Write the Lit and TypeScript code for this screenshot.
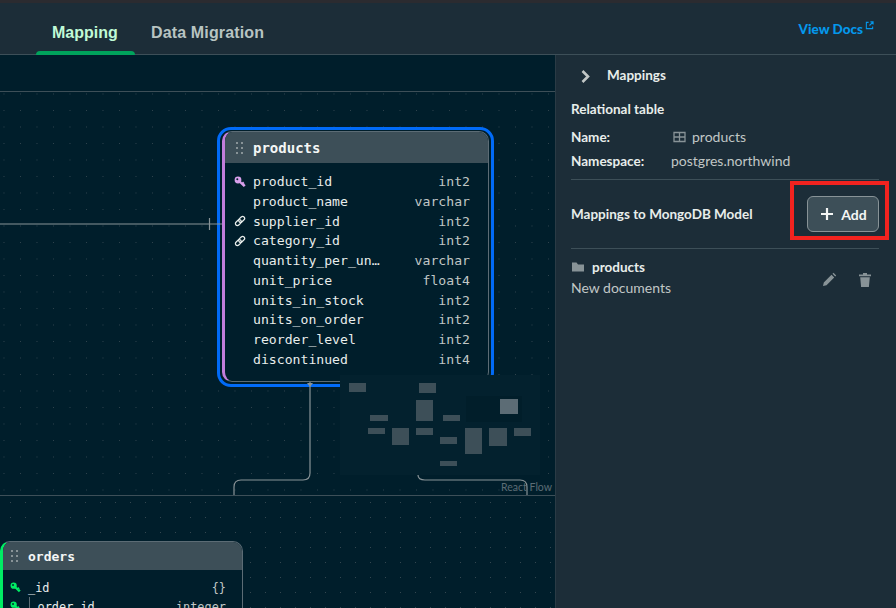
import { LitElement, html, css, svg } from "lit";
import { customElement } from "lit/decorators.js";

const rows: [string, string, string][] = [
  ["key", "product_id", "int2"],
  ["", "product_name", "varchar"],
  ["link", "supplier_id", "int2"],
  ["link", "category_id", "int2"],
  ["", "quantity_per_un…", "varchar"],
  ["", "unit_price", "float4"],
  ["", "units_in_stock", "int2"],
  ["", "units_on_order", "int2"],
  ["", "reorder_level", "int2"],
  ["", "discontinued", "int4"],
];

// minimap nodes: x, y, w, h in minimap coordinates
const mini: [number, number, number, number][] = [
  [9, 8, 17, 9], [79, 8, 17, 10], [76, 25, 17, 21], [30, 40, 18, 6], [103, 40, 17, 6],
  [28, 53, 17, 6], [52, 53, 17, 17], [76, 53, 17, 7], [100, 62, 17, 7], [125, 53, 17, 26],
  [149, 53, 18, 18], [174, 53, 17, 8], [100, 86, 17, 5],
];

const keyIcon = (c: string) => svg`<svg class="ico" viewBox="0 0 12 12" style="color:${c}"><circle cx="4" cy="4" r="3.4" fill="currentColor"/><path d="M5.500 5.500l5 4.800M8 8l1.800-1.600M9.700 9.600l1.200-1.100" stroke="currentColor" stroke-width="2.200" fill="none"/><circle cx="3.300" cy="3.300" r="1" fill="#001e2b"/></svg>`;
const linkIcon = svg`<svg class="ico" viewBox="0 0 12 12"><g transform="rotate(-45 6 6)" stroke="#e8edeb" stroke-width="1.200" fill="none"><rect x="0.300" y="4" width="6.800" height="4" rx="2"/><rect x="4.900" y="4" width="6.800" height="4" rx="2"/></g></svg>`;
const grip = svg`<svg class="grip" viewBox="0 0 8 12"><g fill="#889397"><rect x="0" y="0" width="2" height="2"/><rect x="5" y="0" width="2" height="2"/><rect x="0" y="5" width="2" height="2"/><rect x="5" y="5" width="2" height="2"/><rect x="0" y="10" width="2" height="2"/><rect x="5" y="10" width="2" height="2"/></g></svg>`;

@customElement("app-root")
export class AppRoot extends LitElement {
  static styles = css`
    :host { display: block; width: 896px; height: 608px; overflow: hidden; background: #001e2b; font-family: "Lato", sans-serif; color: #e8edeb; }
    * { box-sizing: border-box; }
    .app { display: flex; flex-direction: column; height: 608px; }
    .chrome { height: 3px; background: #2b2b30; flex: none; }
    .header { height: 52px; flex: none; background: #1c2d38; border-bottom: 1px solid #3d4f58; display: flex; align-items: flex-end; padding-left: 36px; position: relative; }
    .tab { font: 700 16px "Liberation Sans", sans-serif; color: #b8c4c2; height: 51px; padding: 21px 16px 0; }
    .tab.on { color: #c0fad6; width: 99px; position: relative; }
    .tab.on::after { content: ""; position: absolute; left: 0; right: 0; bottom: -1px; height: 4px; background: #00a35c; border-radius: 4px 4px 0 0; }
    .tab.next { letter-spacing: 0.15px; }
    .docs { margin-left: auto; margin-right: 22px; align-self: center; display: flex; color: #0498ec; font: 900 13.500px "Lato", sans-serif; }
    .docs svg { width: 9px; height: 9px; margin: 0 0 0 2px; }
    .body { flex: 1; display: flex; min-height: 0; }
    .canvas { width: 555px; flex: none; display: flex; flex-direction: column; }
    .gap { height: 36px; flex: none; }
    .pane { position: relative; overflow: hidden; }
    .upper { height: 405px; border-top: 1px solid #3d4f58; border-bottom: 1px solid #3d4f58;
      background-image: radial-gradient(circle at 0.5px 0.5px, #2f434d 0.7px, transparent 0.8px); background-size: 16.5px 16.5px; background-position: 3.5px 1.5px; }
    .lower { flex: 1; background-image: radial-gradient(circle at 0.5px 0.5px, #344750 0.7px, transparent 0.8px); background-size: 15px 15px; background-position: 10px 6px; }
    .edges { position: absolute; left: 0; top: 0; width: 555px; height: 404px; }
    .ring { position: absolute; left: 217px; top: 35px; width: 277px; height: 260px; border: 3px solid #016bf8; border-radius: 14px; }
    .node { position: absolute; background: #001e2b; border: 1px solid #5c6c75; border-left: 3px solid #c27ddb; border-radius: 10px; overflow: hidden; }
    .products { left: 222px; top: 39px; width: 267px; height: 251px; }
    .orders { position: absolute; left: 0; top: 45px; width: 243px; height: 100px; border-left-color: #00ed64; }
    .nhead { height: 31px; background: #3d4f58; display: flex; align-items: center; padding-left: 11px; gap: 9px; font: 700 14px "DejaVu Sans Mono", monospace; color: #f4f6f5; }
    .grip { width: 8px; height: 12px; flex: none; }
    .orders .nhead { height: 28px; padding-left: 8px; gap: 9px; font-size: 13px; }
    .list { padding-top: 8.800px; }
    .row { height: 19.750px; display: flex; align-items: center; font: 13.150px "DejaVu Sans Mono", monospace; color: #e8edeb; padding-right: 18px; }
    .cell { width: 28px; flex: none; padding-left: 9px; display: flex; }
    .ico { width: 12px; height: 12px; display: block; }
    .type { margin-left: auto; color: #c1c7c6; }
    .orders .list { padding-top: 8px; }
    .orders .row { padding-right: 16px; font-size: 11.900px; height: 19px; }
    .orders .cell { width: 25px; padding-left: 7px; }
    .orders .ico { width: 11px; height: 11px; }
    .nested { margin-left: 0.500px; padding-left: 8px; border-left: 1px solid #5c6c75; height: 100%; display: flex; align-items: center; }
    .minimap { position: absolute; left: 340px; top: 283px; width: 200px; height: 100px; background: #03212e; }
    .mview { position: absolute; left: 126px; top: 21px; width: 56px; height: 26px; background: #011e2a; }
    .mn { position: absolute; background: #3d4f58; }
    .mn.sel { background: #5c6c75; }
    .attr { position: absolute; right: 3px; bottom: 2px; font: 10.500px "Lato", sans-serif; color: #5c6c75; }
    aside { flex: 1; background: #1c2d38; border-left: 1px solid #2a3b45; padding: 0 17px 0 15px; font-size: 14px; }
    .collapse { height: 41px; padding-bottom: 1px; display: flex; align-items: center; gap: 15px; padding-left: 9px; font-weight: 700; font-size: 13.500px; }
    .collapse svg { width: 12px; height: 14px; overflow: visible; }
    h4 { margin: 0; font-weight: 700; font-size: 13.500px; line-height: 18px; padding-top: 4px; height: 32px; }
    .kv { display: grid; grid-template-columns: 100px 1fr; row-gap: 6px; padding-bottom: 9px; border-bottom: 1px solid #3d4f58; line-height: 18px; }
    .kv b { font-weight: 700; font-size: 13.500px; }
    .kv span { display: flex; align-items: center; color: #c1c7c6; }
    .kv svg { width: 13px; height: 12px; margin: 0 6px 0 2px; }
    .maprow { height: 69px; display: flex; align-items: center; justify-content: space-between; border-bottom: 1px solid #3d4f58; font-weight: 700; font-size: 13.500px; }
    button { position: relative; width: 72px; height: 36px; background: #3d4f58; border: 1px solid #889397; border-radius: 6px; color: #f4f6f5; font: 700 14px "Lato", sans-serif; display: flex; align-items: center; justify-content: center; gap: 8px; padding: 0 0 0 2px; }
    button svg { width: 12px; height: 12px; }
    button::after { content: ""; position: absolute; left: -18px; right: -11px; top: -16px; bottom: -9px; border: 4px solid #f2231f; }
    .item { display: flex; padding-top: 9px; }
    .name { display: flex; align-items: center; gap: 7px; font-weight: 700; font-size: 13.500px; line-height: 18px; }
    .name svg { width: 14px; height: 12px; }
    .sub { color: #c1c7c6; line-height: 18px; margin-top: 3px; }
    .acts { margin-left: auto; display: flex; gap: 20px; align-items: center; padding: 14px 6px 0 0; align-self: flex-start; }
    .acts svg { width: 16px; height: 16px; display: block; }
  `;

  private field(r: [string, string, string]) {
    return html`<div class="row"><span class="cell">${r[0] === "key" ? keyIcon("#d9a0ec") : r[0] === "link" ? linkIcon : ""}</span><span>${r[1]}</span><span class="type">${r[2]}</span></div>`;
  }

  render() {
    return html`<div class="app">
      <div class="chrome"></div>
      <div class="header">
        <div class="tab on">Mapping</div>
        <div class="tab next">Data Migration</div>
        <div class="docs">View Docs<svg viewBox="0 0 10 10"><path d="M4 1.500H1.500v7h7V6M5 5l4-4M6 1h3v3" stroke="currentColor" stroke-width="1.200" fill="none"/></svg></div>
      </div>
      <div class="body">
        <div class="canvas">
          <div class="gap"></div>
          <div class="pane upper">
            <div class="ring"></div>
            <div class="node products">
              <div class="nhead">${grip}<span>products</span></div>
              <div class="list">${rows.map((r) => this.field(r))}</div>
            </div>
            <svg class="edges" viewBox="0 0 555 404" fill="none" stroke="#889397" stroke-width="1.200">
              <path d="M0 132H222M209.500 126V138"/>
              <path d="M310 290V381Q310 388 303 388H241Q234 388 234 395V404"/>
              <path d="M418 383Q418 388 425 388H520Q527 388 527 395V404"/>
              <path d="M307 291h6l-3 4z" fill="#889397" stroke="none"/>
            </svg>
            <div class="minimap">
              <div class="mview"></div>
              ${mini.map((m) => html`<div class="mn" style="left:${m[0]}px;top:${m[1]}px;width:${m[2]}px;height:${m[3]}px"></div>`)}
              <div class="mn sel" style="left:160px;top:24px;width:18px;height:15px"></div>
            </div>
            <div class="attr">React Flow</div>
          </div>
          <div class="pane lower">
            <div class="node orders">
              <div class="nhead">${grip}<span>orders</span></div>
              <div class="list">
                <div class="row"><span class="cell">${keyIcon("#00ed64")}</span><span>_id</span><span class="type">{}</span></div>
                <div class="row"><span class="cell">${keyIcon("#00ed64")}</span><span class="nested">order_id</span><span class="type">integer</span></div>
              </div>
            </div>
          </div>
        </div>
        <aside>
          <div class="collapse"><svg viewBox="0 0 12 14"><path d="M2.500 3L8 8.500 2.500 14" stroke="#c1c7c6" stroke-width="2.600" fill="none"/></svg>Mappings</div>
          <h4>Relational table</h4>
          <div class="kv">
            <b>Name:</b><span><svg viewBox="0 0 13 12"><path d="M1 1.500h11v9H1zM1 6h11M6.500 1.500v9" stroke="#889397" stroke-width="1.300" fill="none"/></svg>products</span>
            <b>Namespace:</b><span>postgres.northwind</span>
          </div>
          <div class="maprow">Mappings to MongoDB Model
            <button><svg viewBox="0 0 12 12"><path d="M6 0v12M0 6h12" stroke="#f4f6f5" stroke-width="2.200"/></svg>Add</button>
          </div>
          <div class="item">
            <div>
              <div class="name"><svg viewBox="0 0 14 12"><path d="M1 1.500h4.500l1.500 2h6v7H1z" fill="#889397"/></svg>products</div>
              <div class="sub">New documents</div>
            </div>
            <div class="acts">
              <svg viewBox="0 0 16 16"><path d="M2 14l.8-3.500L10.500 2.800l2.700 2.700-7.700 7.700zM11.500 1.800l1-1 2.700 2.700-1 1z" fill="#889397"/></svg>
              <svg viewBox="0 0 16 16"><path d="M2 2.500h12v1.800H2zM6 1h4v1.500H6zM3.200 5.300h9.600l-.9 9.700H4.100z" fill="#889397"/></svg>
            </div>
          </div>
        </aside>
      </div>
    </div>`;
  }
}
